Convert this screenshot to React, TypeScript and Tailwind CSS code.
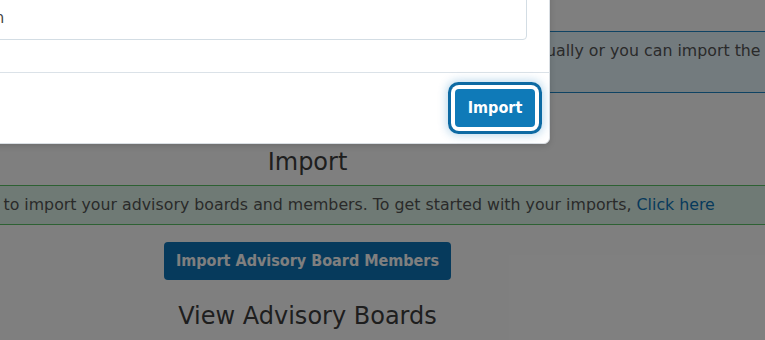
import React from 'react';

export default function App() {
  return (
    <div className="relative h-[340px] w-[765px] overflow-hidden bg-white font-['DejaVu_Sans',sans-serif]">
      {/* page under the dialog */}
      <div className="ml-[-160px] flex w-[935px] flex-col items-center text-[15.8px] leading-[22px] text-[#555]">
        <div className="mt-[31px] w-full whitespace-nowrap border-y border-[#1f86c6] bg-[#e7f6fd] py-2 pl-[24px]">
          You can create your advisory boards and add the members to each of the boards manually or you can import the
          <br />
          data in bulk using the import tool.
        </div>
        <h2 className="mt-[55px] text-[24px] leading-[1.2] text-[#3c3c3c]">Import</h2>
        <div className="mt-[8px] w-full whitespace-nowrap border-y border-[#5ac266] bg-[#dff5ea] py-2 text-center">
          Use this tool to import your advisory boards and members. To get started with your imports,{' '}
          <a href="#" className="text-[#0e75b9]">
            Click here
          </a>
        </div>
        <button
          type="button"
          className="mt-[17px] h-[38px] rounded bg-[#0c74b8] px-3 font-['DejaVu_Sans_Condensed',sans-serif] text-[16px] font-bold text-white"
        >
          Import Advisory Board Members
        </button>
        <h2 className="mt-[22px] text-[24px] leading-[1.2] text-[#3c3c3c]">View Advisory Boards</h2>
      </div>

      {/* backdrop */}
      <div className="absolute inset-0 bg-black/50" />

      {/* dialog */}
      <div className="absolute left-[-342px] right-[215px] top-[-21px] rounded-md border border-[#d9dee3] bg-white shadow-[0_2px_6px_rgba(0,0,0,0.15)]">
        <div className="pb-[32px] pl-4 pr-[22px] pt-4">
          <input
            readOnly
            value="Advisory Board Members Import Selection"
            className="h-[44px] w-full rounded border border-[#d3dde4] px-3 text-[15px] text-[#444] outline-none"
          />
        </div>
        <div className="flex justify-end border-t border-[#dbe2e8] py-4 pr-[14px]">
          <button
            type="button"
            className="h-[38px] w-[80px] rounded bg-[#0f7ab8] font-['DejaVu_Sans_Condensed',sans-serif] text-[16px] font-bold text-white shadow-[0_0_0_4px_#fff,0_0_0_7px_#0d6aa3,0_0_10px_8px_rgba(14,117,185,0.3)]"
          >
            Import
          </button>
        </div>
      </div>
    </div>
  );
}
